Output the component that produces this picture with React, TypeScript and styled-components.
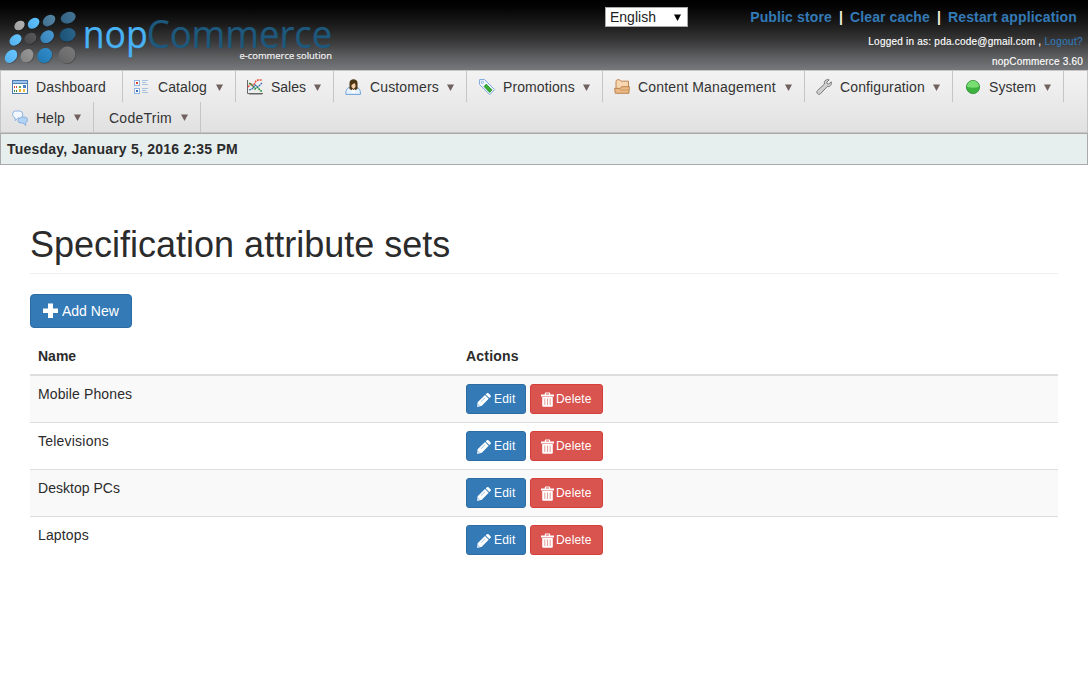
import React from "react";
import styled, { createGlobalStyle } from "styled-components";

const GlobalStyle = createGlobalStyle`
  * { box-sizing: border-box; }
  html, body { margin: 0; background: #fff; }
  body { font-family: "Liberation Sans", Arial, sans-serif; font-size: 14px; line-height: 20px; color: #2b2b2b; }
  #root { height: 674px; overflow: hidden; }
`;

const Label = styled.span<{ $track?: number }>`
  white-space: nowrap;
  letter-spacing: ${(p) => p.$track ?? 0}px;
`;

const Header = styled.header`
  display: flex;
  height: 70px;
  background: linear-gradient(#000 0%, #050505 12%, #1c1c1c 36%, #3a3a3b 60%, #5e5f61 82%, #77787b 100%);
`;

const LogoArt = styled.svg`
  display: block;
  width: 340px;
  height: 70px;
  overflow: visible;
  font-family: "Open Sans", "Noto Sans", sans-serif;
`;

const LanguageSelect = styled.div`
  display: flex;
  align-items: center;
  justify-content: space-between;
  width: 83px;
  height: 20px;
  margin: 7px 0 0 265px;
  padding: 0 6px 0 4px;
  background: #fff;
  border: 1px solid #a9a9a9;
  color: #222;
`;

const AccountArea = styled.div`
  flex: 1;
  display: flex;
  flex-direction: column;
  align-items: flex-end;
  padding: 7px 5px 0 0;
`;

const StoreLinks = styled.div`
  display: flex;
  height: 20px;
  padding-right: 6px;
  font-weight: bold;
  color: #fff;
`;

const Bar = styled.span`
  width: 18px;
  text-align: center;
  color: #f5f1dc;
`;

const Link = styled.a`
  color: #337ab7;
`;

const SmallLine = styled.div<{ $top: number }>`
  display: flex;
  height: 12px;
  margin-top: ${(p) => p.$top}px;
  font-size: 10px;
  line-height: 12px;
  color: #fff;
  -webkit-text-stroke: 0.15px currentColor;
`;

const Menu = styled.nav`
  display: flex;
  flex-wrap: wrap;
  height: 63px;
  border: 1px solid #c5c5c5;
  background: linear-gradient(#f3f3f3, #e1e1e1);
`;

const MenuItem = styled.div<{ $width: number; $bare?: boolean }>`
  display: flex;
  align-items: center;
  width: ${(p) => p.$width}px;
  height: ${(p) => (p.$width === 93 || p.$bare ? 30 : 31)}px;
  padding: 1px 12px 0 ${(p) => (p.$bare ? 15 : 11)}px;
  border-right: 1px solid #c5c5c5;
  color: #333;
`;

const MenuIcon = styled.svg<{ $gap: number }>`
  flex: none;
  width: 16px;
  height: 16px;
  margin-right: ${(p) => p.$gap}px;
`;

const MenuArrow = styled.svg`
  flex: none;
  width: 7px;
  height: 7px;
  margin: 0 0 0 auto;
  fill: #70615f;
`;

const DateBar = styled.div`
  height: 32px;
  padding: 5px 6px;
  background: #e6efee;
  border: 1px solid #a9a9a9;
  font-weight: bold;
`;

const Content = styled.main`
  padding: 60px 30px 0;
`;

const Title = styled.h1`
  height: 49px;
  margin: 0 0 20px;
  border-bottom: 1px solid #eee;
  font-size: 36px;
  font-weight: normal;
  line-height: 40px;
`;

const Button = styled.button<{ $tone?: "danger"; $large?: boolean; $width: number }>`
  display: inline-flex;
  align-items: center;
  justify-content: flex-start;
  width: ${(p) => p.$width}px;
  height: ${(p) => (p.$large ? 34 : 30)}px;
  padding: 0 0 0 ${(p) => (p.$large ? 12 : 10)}px;
  gap: ${(p) => (p.$tone ? 2 : 3)}px;
  border: 1px solid ${(p) => (p.$tone ? "#d43f3a" : "#2e6da4")};
  border-radius: ${(p) => (p.$large ? 4 : 3)}px;
  background: ${(p) => (p.$tone ? "#d9534f" : "#337ab7")};
  color: #fff;
  font: ${(p) => (p.$large ? 14 : 12)}px "Liberation Sans", Arial, sans-serif;
`;

const ButtonIcon = styled.svg<{ $width: number; $height: number }>`
  flex: none;
  width: ${(p) => p.$width}px;
  height: ${(p) => p.$height}px;
  fill: #fff;
`;

const Table = styled.div`
  margin-top: 10px;
`;

const Row = styled.div<{ $striped?: boolean; $first?: boolean }>`
  display: grid;
  grid-template-columns: 428px 1fr;
  height: ${(p) => (p.$first ? 46 : 47)}px;
  padding: 8px;
  border-top: ${(p) => (p.$first ? "none" : "1px solid #ddd")};
  background: ${(p) => (p.$striped ? "#f9f9f9" : "#fff")};
`;

const HeadRow = styled(Row)`
  height: 38px;
  border-top: none;
  border-bottom: 2px solid #ddd;
  font-weight: bold;
`;

const Actions = styled.div`
  display: flex;
  gap: 4px;
`;

const dots: [number, number, number, number, string][] = [
  [19.5, 25.5, 5.6, 4.3, "#adadad"], [33.6, 23.2, 6.4, 4.8, "#55bdff"], [49, 20.6, 6.9, 5.1, "#477a9c"], [68.2, 17.7, 7.7, 5.6, "#36698d"],
  [15.5, 40, 6.7, 4.9, "#5bc0ff"], [30.4, 38.4, 6.5, 5.2, "#4d4d4f"], [47.2, 36.8, 7.4, 5.8, "#3a8ec9"], [67.7, 34.8, 8.1, 6.6, "#1c5880"],
  [11, 56.4, 7.3, 5.4, "#5bbfff"], [27, 55.8, 7.2, 6, "#8f8f8f"], [44.7, 55.5, 7.9, 7, "#2383c2"], [67, 55, 8.8, 8.2, "#6e6e6e"],
];

const Logo = () => (
  <LogoArt viewBox="0 0 340 70">
    <defs>
      <linearGradient id="gloss" x1="0" y1="0" x2="1" y2="0">
        <stop offset="0" stopColor="#000" stopOpacity=".08" />
        <stop offset="1" stopColor="#fff" stopOpacity=".06" />
      </linearGradient>
    </defs>
    {dots.map(([x, y, rx, ry, fill], i) => (
      <g key={i} transform={`rotate(${i > 7 ? -50 : i % 4 === 3 ? -20 : -38} ${x} ${y})`}>
        <ellipse cx={x} cy={y + 0.8} rx={rx} ry={ry} fill="#000" opacity=".3" />
        <ellipse cx={x} cy={y} rx={rx} ry={ry} fill={fill} />
        <ellipse cx={x} cy={y} rx={rx} ry={ry} fill="url(#gloss)" />
      </g>
    ))}
    <text x="82.7" y="47.7" fontSize="38.8" fill="#48b2f5" stroke="#48b2f5" strokeWidth=".25" textLength="65" lengthAdjust="spacingAndGlyphs">nop</text>
    <text x="146.7" y="47.7" fontSize="38.8" fill="#1d587d" stroke="#1d587d" strokeWidth=".25" textLength="185.6" lengthAdjust="spacingAndGlyphs">Commerce</text>
    <text x="239.5" y="58.7" fontSize="9.8" fill="#f2f2f2" stroke="#f2f2f2" strokeWidth=".2" textLength="92.5" lengthAdjust="spacingAndGlyphs">e-commerce solution</text>
  </LogoArt>
);

const icons: Record<string, React.ReactNode> = {
  dashboard: (
    <g shapeRendering="crispEdges">
      <path d="M0 1h16v14H0z" fill="#4d7fb5" /><path d="M1 2h14v2H1z" fill="#9cc4ee" /><path d="M1 5h14v9H1z" fill="#fff" />
      <path d="M2 7h1v2H2zM4 7h1v2H4z" fill="#e04a3a" /><path d="M7 7h2v2H7z" fill="#58a846" /><path d="M11 6h3v3h-3z" fill="#4580c2" />
      <path d="M2 11h1v2H2zM4 11h1v2H4z" fill="#3d8d3a" /><path d="M7 10h2v3H7z" fill="#eeb12c" /><path d="M11 10h2v3h-2z" fill="#efb83a" />
    </g>
  ),
  catalog: (
    <g shapeRendering="crispEdges">
      <path d="M.5 1.5h5v5h-5zM.5 9.5h5v5h-5z" fill="#fff" stroke="#8fb4df" />
      <path d="M2 3h2v2H2z" fill="#dc3e24" /><path d="M2 11h2v2H2z" fill="#316cb3" />
      <path d="M8 1.5h6M8 3.5h4M8 5.5h6M8 9.5h6M8 11.5h4M8 13.5h6" stroke="#a9c3de" />
    </g>
  ),
  sales: (
    <g fill="none">
      <path d="M.5 1v13.5H16" stroke="#666" /><path d="M2 15.5h13" stroke="#aaa" />
      <path d="M1 8L4 5l2 2 3-5 2-1h4" stroke="#ed4b38" strokeWidth="1.5" strokeDasharray="2 .8" />
      <path d="M2 4l3 2 3 4 2-2 4 4h1" stroke="#2c9238" strokeWidth="1.5" strokeDasharray="2 .7" />
      <path d="M2 11l3-1 3-4 3 2 4-4" stroke="#3d6eae" strokeWidth="1.3" strokeDasharray="2 .6" />
    </g>
  ),
  customers: (
    <g transform="translate(1 0)">
      <path d="M0 15.4c-.6-4 1.4-6.9 4-7.2h6c3 .3 4.8 3.2 4.4 7.2z" fill="#e6f2ff" stroke="#6da0d7" />
      <path d="M3.5 10V4c0-5 8-5 8 0v6l-2 1h-4z" fill="#4c3717" />
      <path d="M5.5 6l3-2 1 2v2l-2 2-2-2z" fill="#f7cfab" /><path d="M6 10l1.5 1L9 10v4H6z" fill="#fff" />
    </g>
  ),
  promotions: (
    <g transform="translate(1 0)">
      <path d="M.6.6h5l10 10-4.8 5L.6 5.5z" fill="#f5faff" stroke="#79a6dc" />
      <circle cx="3.4" cy="3.4" r="1.2" fill="#fff" stroke="#79a6dc" strokeWidth=".8" />
      <path d="M7.3 5.1l5.8 5.8-2.4 2.5L5 7.5z" fill="#36ae35" stroke="#208320" strokeWidth=".7" />
    </g>
  ),
  content: (
    <g stroke="#b77b43" strokeWidth=".9">
      <path d="M2 13V2.5C2 1 3 .7 5.5.7L7 2.2h7.5V13z" fill="#f7d6b0" />
      <path d="M.6 9.4h5.8l1.3-1.7h7.7l-.5 6.6H1.3z" fill="#eab986" /><path d="M6 11h9" fill="none" opacity=".6" />
    </g>
  ),
  configuration: (
    <path d="M10.1 1C12 .1 13 .4 13.2.8L10.8 3.2l.4 1.5 1.5.4 2.5-2.3c.9 2.8-1.1 5.3-4 4.7L4.5 14.7C2.6 16.5-.4 13.8 1.4 11.7L8.5 5C8 3.1 8.5 1.8 10.1 1z" fill="#d2d2d2" stroke="#777" strokeWidth="1" />
  ),
  system: (
    <g transform="translate(1 0)"><circle cx="8" cy="8" r="6.6" fill="#3eb23e" stroke="#2f8a35" strokeWidth=".8" /><path d="M2 7.8a6 6 0 0 1 12 0c-4 1.4-8 1.4-12 0z" fill="#79de72" /></g>
  ),
  help: (
    <g stroke="#83ace0" strokeWidth=".9">
      <path d="M8 7h5q2.5.5 2.5 2.8 0 2-1.8 2.8v2.9L11 13H9q-3 0-3-2.6z" fill="#b3d3f4" />
      <path d="M3.5 1h4q3.3 0 3.3 3.4Q10.8 8 7.5 8H6l-2.8 2.6V8Q.6 7.3.6 4.4.6 1 3.5 1z" fill="#f3f9ff" />
    </g>
  ),
};

const menu: { label: string; width: number; icon?: string; track?: number; gap?: number; plain?: boolean }[] = [
  { label: "Dashboard", width: 122, icon: "dashboard", track: 0.16, plain: true },
  { label: "Catalog", width: 113, icon: "catalog", track: 0.1 },
  { label: "Sales", width: 98, icon: "sales" },
  { label: "Customers", width: 133, icon: "customers", track: 0.14, gap: 9 },
  { label: "Promotions", width: 136, icon: "promotions", track: 0.1, gap: 9 },
  { label: "Content Management", width: 202, icon: "content", track: 0.17 },
  { label: "Configuration", width: 148, icon: "configuration", track: 0.12 },
  { label: "System", width: 111, icon: "system", track: 0.05, gap: 9 },
  { label: "Help", width: 93, icon: "help" },
  { label: "CodeTrim", width: 107, track: 0.25 },
];

const rows: [string, number][] = [["Mobile Phones", 0.12], ["Televisions", 0.22], ["Desktop PCs", 0.02], ["Laptops", 0.14]];

const PlusIcon = () => (
  <ButtonIcon $width={16} $height={16} viewBox="0 0 16 16"><path d="M5 .5h5v5h5v4.5h-5v5H5v-5H0V5.5h5z" /></ButtonIcon>
);
const PencilIcon = () => (
  <ButtonIcon $width={14} $height={15} viewBox="0 0 14 15">
    <path fillRule="evenodd" d="M9.8 1.3q.9-.8 1.7 0l2 2q.8.8 0 1.7l-1.1 1.1L8.7 2.4zM8 3.1l3.7 3.7-6.9 6.9L.2 15l.4-4.8zM1.6 12.2l-.3 1.4 1.4-.3zM8 5.6L4 9.5l.25.25L8.25 5.85z" />
  </ButtonIcon>
);
const TrashIcon = () => (
  <ButtonIcon $width={13} $height={15} viewBox="0 0 13 15">
    <path d="M3.8 2.4V1.4q0-1 1-1h3.4q1 0 1 1v1H13v2H0v-2zh1.2V1.5h3v.9zM1.2 5h10.6v8.8q0 1-1 1H2.2q-1 0-1-1z" fillRule="evenodd" />
    <path d="M3.3 6.5h1v6.5h-1zM6 6.5h1v6.5H6zM8.7 6.5h1v6.5h-1z" fill="#e5a09a" />
  </ButtonIcon>
);

export default function App() {
  return (
    <>
      <GlobalStyle />
      <Header>
        <Logo />
        <LanguageSelect>
          <Label>English</Label>
          <svg width="7" height="7"><path d="M0 .5h7L3.5 7z" fill="#000" /></svg>
        </LanguageSelect>
        <AccountArea>
          <StoreLinks>
            <Link><Label $track={0.14}>Public store</Label></Link><Bar>|</Bar>
            <Link><Label $track={0.12}>Clear cache</Label></Link><Bar>|</Bar>
            <Link><Label $track={0.16}>Restart application</Label></Link>
          </StoreLinks>
          <SmallLine $top={9}>
            <Label $track={0.23}>Logged in as: pda.code@gmail.com ,&nbsp;</Label><Link><Label $track={0.35}>Logout?</Label></Link>
          </SmallLine>
          <SmallLine $top={8}><Label $track={0.2}>nopCommerce 3.60</Label></SmallLine>
        </AccountArea>
      </Header>
      <Menu>
        {menu.map((m) => (
          <MenuItem key={m.label} $width={m.width} $bare={!m.icon}>
            {m.icon && <MenuIcon $gap={m.gap ?? 8} viewBox="0 0 16 16" overflow="visible">{icons[m.icon]}</MenuIcon>}
            <Label $track={m.track}>{m.label}</Label>
            {!m.plain && <MenuArrow viewBox="0 0 7 7"><path d="M0 .5h7L3.5 7z" /></MenuArrow>}
          </MenuItem>
        ))}
      </Menu>
      <DateBar><Label $track={0.23}>Tuesday, January 5, 2016 2:35 PM</Label></DateBar>
      <Content>
        <Title><Label>Specification attribute sets</Label></Title>
        <Button $large $width={102}><PlusIcon /><Label>Add New</Label></Button>
        <Table>
          <HeadRow><Label>Name</Label><Label $track={0.2}>Actions</Label></HeadRow>
          {rows.map(([name, track], i) => (
            <Row key={name} $striped={i % 2 === 0} $first={i === 0}>
              <Label $track={track}>{name}</Label>
              <Actions>
                <Button $width={60}><PencilIcon /><Label $track={0.2}>Edit</Label></Button>
                <Button $width={73} $tone="danger"><TrashIcon /><Label $track={0.15}>Delete</Label></Button>
              </Actions>
            </Row>
          ))}
        </Table>
      </Content>
    </>
  );
}
